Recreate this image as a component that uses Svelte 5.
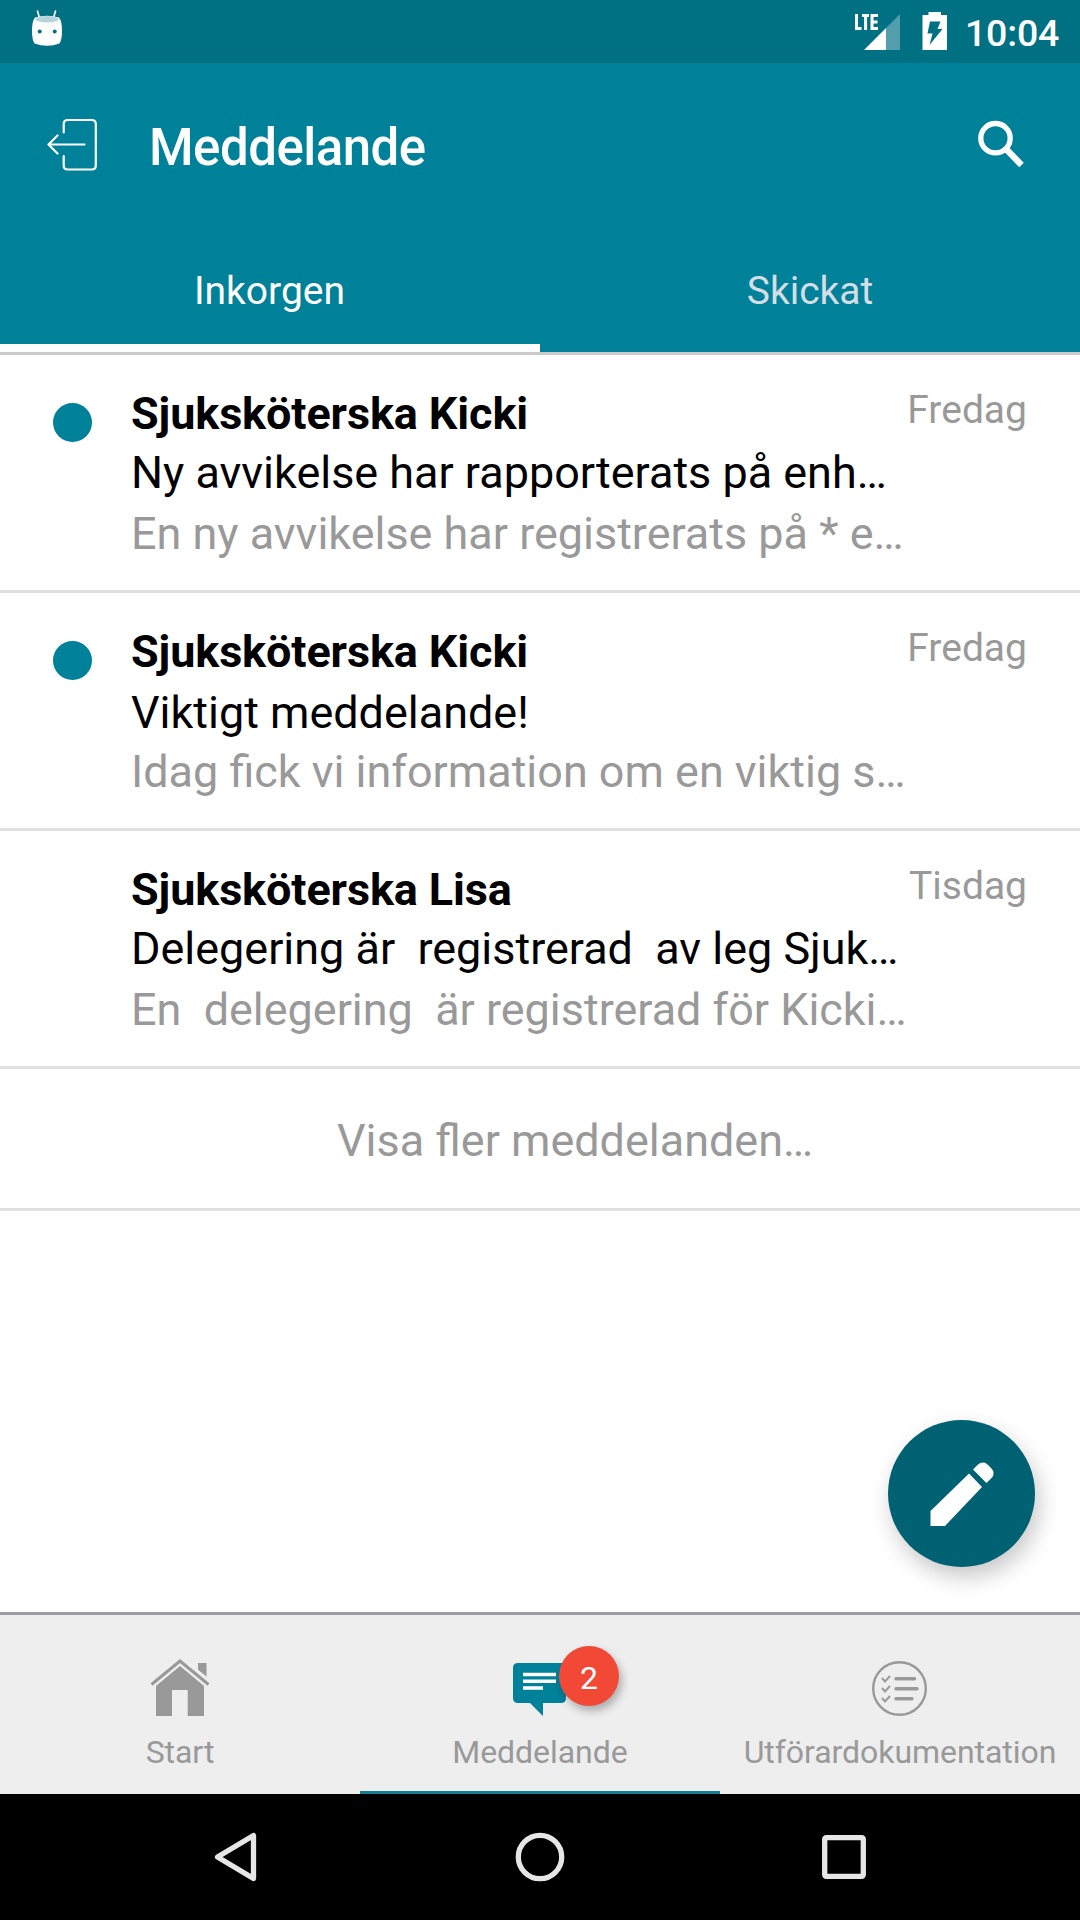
<script>
  const tabs = [
    { label: 'Inkorgen', active: true },
    { label: 'Skickat', active: false }
  ];
  const messages = [
    { from: 'Sjuksköterska Kicki', subject: 'Ny avvikelse har rapporterats på enh…', preview: 'En ny avvikelse har registrerats på * e…', day: 'Fredag', unread: true },
    { from: 'Sjuksköterska Kicki', subject: 'Viktigt meddelande!', preview: 'Idag fick vi information om en viktig s…', day: 'Fredag', unread: true },
    { from: 'Sjuksköterska Lisa', subject: 'Delegering är  registrerad  av leg Sjuk…', preview: 'En  delegering  är registrerad för Kicki…', day: 'Tisdag', unread: false }
  ];
</script>

<div class="screen">
  <div class="status">
    <svg class="droid" width="32" height="40" viewBox="0 0 32 40">
      <path d="M6.500 2l2 7M24.500 2l-2 7" stroke="#fff" stroke-width="1.700" stroke-linecap="round" />
      <path d="M4 8.500Q16 5 28 8.500Q31 12 31 22Q31 31 28.500 34.500Q16 39 3.500 34.500Q1 31 1 22Q1 12 4 8.500z" fill="#fff" />
      <ellipse cx="16" cy="10.300" rx="11.500" ry="3.200" fill="#b5d3d9" />
      <circle cx="8.700" cy="22.500" r="2" fill="#007083" /><circle cx="23.700" cy="22.500" r="2" fill="#007083" />
    </svg>
    <div class="indicators">
      <svg width="46" height="40" viewBox="0 0 46 40">
        <path d="M45 3V39H31V17z" fill="#529eac" />
        <path d="M31 17V39H9z" fill="#fff" />
        <path d="M1.500 3V17.500H6.500M7 4.500H14M10.600 4.500V19M23 4.500H17V17.500H23M17 11H22.500" fill="none" stroke="#fff" stroke-width="3" />
      </svg>
      <svg class="battery" width="26" height="40" viewBox="0 0 26 40">
        <path d="M0.500 4H6.500V1H19V4H25V39H0.500z" fill="#fff" />
        <path d="M8 10.500H18.500L15.500 18H20.500L7.500 34L10.500 22.500H5.500z" fill="#007083" />
      </svg>
      <span class="clock">10:04</span>
    </div>
  </div>

  <header>
    <svg class="exit" width="50" height="54" viewBox="0 0 50 54" fill="none" stroke="#fff" stroke-width="2.200" stroke-linecap="round" stroke-linejoin="round">
      <path d="M16.700 14.500V6Q16.700 2 20.700 2H44.800Q48.800 2 48.800 6V47.500Q48.800 51.500 44.800 51.500H20.700Q16.700 51.500 16.700 47.500V38" />
      <path d="M37.500 26.500H1.500M10.500 17.500L1.500 26.500L10.500 35.500" />
    </svg>
    <h1>Meddelande</h1>
    <svg class="search" width="48" height="48" viewBox="0 0 48 48" fill="none" stroke="#fff">
      <circle cx="17.500" cy="18.200" r="14.700" stroke-width="5.300" />
      <path d="M28 29L43.500 45" stroke-width="6.300" />
    </svg>
  </header>

  <nav class="tabs">
    {#each tabs as tab}
      <div class="tab" class:active={tab.active}>{tab.label}</div>
    {/each}
  </nav>

  <main>
    {#each messages as m}
      <article>
        <div class="marker">{#if m.unread}<i class="dot"></i>{/if}</div>
        <div class="body">
          <div class="top"><b>{m.from}</b><span class="day">{m.day}</span></div>
          <div class="subject">{m.subject}</div>
          <div class="preview">{m.preview}</div>
        </div>
      </article>
    {/each}
    <div class="more">Visa fler meddelanden…</div>
    <button class="fab" aria-label="Nytt meddelande">
      <svg width="66" height="66" viewBox="0 -1 66 66" fill="#fff">
        <path d="M1.500 64V49L40 11.500L53 25L16 64z" />
        <path d="M44 7.500L49 2.500Q51 0.500 54.500 0.500Q56.500 0.500 58.500 2.500L62.500 6.500Q65 9 64.500 11.500Q64.500 14 63 15.500L57.500 21z" />
      </svg>
    </button>
  </main>

  <nav class="bottom">
    <div class="item">
      <svg width="60" height="60" viewBox="0 0 60 60" fill="#999">
        <path d="M1.500 25.500L30 2L58.500 25.500" fill="none" stroke="#999" stroke-width="3" />
        <path d="M48 4H56.500V17.500L48 10.800z" />
        <path d="M30 7L54 27V57H37.700V31H22V57H6V27z" />
      </svg>
      <span>Start</span>
    </div>
    <div class="item current">
      <div class="chat">
        <svg width="54" height="54" viewBox="0 0 54 54">
          <path d="M6 0H48Q53 0 53 5V35Q53 40 48 40H30V53L17 40H5Q0 40 0 35V5Q0 0 5 0z" fill="#00819a" />
          <path d="M10 11.500H43M10 18.300H43M10 25H30" stroke="#fff" stroke-width="3.500" />
        </svg>
        <em class="badge">2</em>
      </div>
      <span>Meddelande</span>
    </div>
    <div class="item">
      <svg width="60" height="60" viewBox="0 0 60 60" fill="none" stroke="#999">
        <circle cx="29.500" cy="29.500" r="26.300" stroke-width="2.400" />
        <path d="M12 19L15 22.500L20 17M12 29L15 32.500L20 27M12 39L15 42.500L20 37" stroke-width="2" />
        <path d="M26 19.700H44.500M26 29.700H47M26 39.700H42" stroke-width="3.400" stroke-linecap="round" />
      </svg>
      <span>Utförardokumentation</span>
    </div>
  </nav>

  <div class="system">
    <svg width="44" height="52" viewBox="0 0 44 52"><path d="M39.500 4.500V47.500L3.500 26z" /></svg>
    <svg width="50" height="50" viewBox="0 0 50 50"><circle cx="25" cy="25" r="21.700" /></svg>
    <svg width="44" height="44" viewBox="0 0 44 44"><rect x="2.700" y="2.700" width="38.600" height="38.600" rx="1.500" /></svg>
  </div>
</div>

<style>
  :global(body) { margin: 0; }
  .screen { width: 1080px; height: 1920px; display: flex; flex-direction: column; background: #fff; font-family: Roboto, sans-serif; overflow: hidden; }
  .screen * { box-sizing: border-box; }
  svg { display: block; flex: none; }
  .status { height: 63px; background: #007083; display: flex; justify-content: space-between; align-items: flex-start; padding: 9px 21px 0 31px; }
  .indicators { display: flex; padding-top: 2px; }
  .battery { margin-left: 21px; }
  .clock { margin-left: 17px; width: 94px; font-size: 37.500px; line-height: 45px; letter-spacing: -0.200px; font-weight: 500; color: #fff; white-space: nowrap; }
  header { height: 168px; background: #00819a; display: flex; align-items: center; padding: 0 54px 4px 46.500px; }
  h1 { margin: 5px auto 0 52.500px; font-size: 51px; line-height: 60px; letter-spacing: -0.500px; font-weight: 500; color: #fff; }
  .search { margin-top: -2px; }
  .tabs { display: flex; height: 124px; background: #00819a; border-bottom: 3px solid #cbcbcb; }
  .tab { width: 50%; padding-top: 37px; text-align: center; font-size: 39px; line-height: 46px; color: #d6dde4; }
  .tab.active { color: #fff; border-bottom: 8px solid #fff; padding-right: 1px; }
  main { position: relative; flex: 1; }
  article { display: flex; height: 238px; border-bottom: 3px solid #e0e0e0; padding: 29px 53px 0; }
  .marker { width: 78px; flex: none; padding-top: 19px; }
  .dot { display: block; width: 39px; height: 39px; border-radius: 50%; background: #00819a; }
  .body { flex: 1; min-width: 0; font-size: 44.940px; line-height: 60px; color: #000; }
  .top { display: flex; justify-content: space-between; height: 59px; }
  .top b { font-weight: 700; letter-spacing: -0.100px; }
  .day { font-size: 39px; line-height: 53px; color: #999; }
  .subject, .preview { white-space: pre; }
  .subject { height: 61px; }
  .preview { height: 60px; color: #999; }
  article:nth-child(2) .top { height: 61px; }
  article:nth-child(2) .subject { height: 59px; }
  .more { height: 142px; border-bottom: 3px solid #e0e0e0; padding-left: 70px; text-align: center; font-size: 44.940px; line-height: 144px; color: #999; }
  .fab { position: absolute; right: 45px; bottom: 45px; width: 147px; height: 147px; border: 0; border-radius: 50%; background: #006172; box-shadow: 4px 10px 22px rgba(0, 0, 0, .22); display: grid; place-items: center; padding: 0; }
  .bottom { height: 182px; flex: none; display: flex; background: #eee; border-top: 3px solid #9e9da4; }
  .item { width: 360px; display: flex; flex-direction: column; align-items: center; padding-top: 44px; border-bottom: 3px solid transparent; font-size: 32px; line-height: 38px; color: #999; }
  .item span { margin-top: 14px; letter-spacing: -0.050px; }
  .current { border-color: #167c92; }
  .chat { position: relative; height: 60px; padding-top: 4px; }
  .badge { position: absolute; left: 46px; top: -13px; width: 60px; height: 60px; border-radius: 50%; background: #f14936; color: #fff; font-style: normal; font-size: 32px; line-height: 65px; text-align: center; box-shadow: 3px 5px 9px rgba(0, 0, 0, .28); }
  .system { height: 126px; flex: none; background: #000; display: flex; align-items: center; padding-left: 214px; }
  .system svg { fill: none; stroke: #e6e6e6; stroke-width: 5.300; stroke-linejoin: round; }
  .system svg:nth-child(2) { margin-left: 257px; }
  .system svg:nth-child(3) { margin-left: 257px; }
</style>
